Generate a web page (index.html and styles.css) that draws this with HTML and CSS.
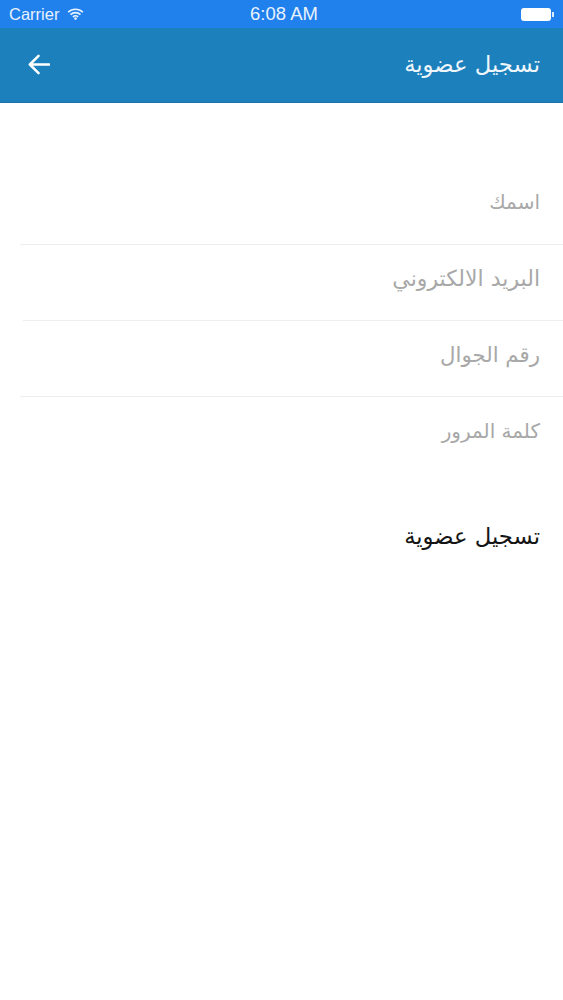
FILE: index.html
```html
<!DOCTYPE html>
<html lang="ar">
<head>
<meta charset="utf-8">
<title>تسجيل عضوية</title>
<link rel="stylesheet" href="styles.css">
</head>
<body>
<div class="status">
  <div class="status-left">
    <span>Carrier</span>
    <svg class="wifi" viewBox="0 0 18 13" width="17" height="12"><path d="M1 4.6a11.4 11.4 0 0 1 16 0M3.6 7.2a7.8 7.8 0 0 1 10.8 0M6.2 9.7a4 4 0 0 1 5.6 0" fill="none" stroke="#e8f2fd" stroke-width="1.7"/><circle cx="9" cy="11.5" r="1.4" fill="#e8f2fd"/></svg>
  </div>
  <div class="status-time">6:08 AM</div>
  <div class="status-right">
    <span class="battery"></span><span class="battery-tip"></span>
  </div>
</div>
<header class="bar">
  <svg class="back" viewBox="0 0 24 22" width="22" height="21"><path d="M23 11H2M11.5 1.5 2 11l9.5 9.5" fill="none" stroke="#fff" stroke-width="2.7" stroke-linecap="round" stroke-linejoin="round"/></svg>
  <h1 class="title" dir="rtl">تسجيل عضوية</h1>
</header>
<main class="form">
  <div class="field f-name" dir="rtl">اسمك</div>
  <div class="rule rule-a"></div>
  <div class="field f-email" dir="rtl">البريد الالكتروني</div>
  <div class="rule rule-b"></div>
  <div class="field f-phone" dir="rtl">رقم الجوال</div>
  <div class="rule rule-a"></div>
  <div class="field f-pass" dir="rtl">كلمة المرور</div>
  <div class="submit" dir="rtl">تسجيل عضوية</div>
</main>
</body>
</html>
```
FILE: styles.css
```css
* { box-sizing: border-box; }
html, body { margin: 0; padding: 0; background: #fff; }
body { font-family: "DejaVu Sans", "Noto Sans", sans-serif; width: 563px; height: 1000px; overflow: hidden; }
.status { height: 28px; background: #2080ec; color: #e8f2fd; display: grid; grid-template-columns: 1fr auto 1fr; align-items: center; padding: 0 9px; font-family: "Liberation Sans", sans-serif; font-size: 16.5px; }
.status-left { display: flex; align-items: center; gap: 8px; }
.status-time { font-size: 18.5px; color: #e8f2fd; margin-left: 5px; }
.status-right { display: flex; justify-content: flex-end; align-items: center; }
.battery { width: 30px; height: 13px; background: #fff; border-radius: 3px; }
.battery-tip { width: 2px; height: 5px; background: #dbe9fb; margin-left: 1px; }
.bar { height: 75px; background: #1b80bc; display: flex; align-items: center; justify-content: space-between; padding: 0 23px 3px 28px; box-shadow: inset 0 -1px 0 #1a74ab; }
.back { display: block; }
.title { margin: 0; font-size: 22.7px; font-weight: 400; color: #eef6fb; }
.form { display: flex; flex-direction: column; padding-top: 66px; }
.field { height: 75px; padding: 17px 23px 0 0; font-size: 20px; line-height: 32px; color: #a8a8a8; }
.f-email { font-size: 22px; padding-top: 18px; }
.f-phone { font-size: 21.3px; padding-top: 18px; }
.f-pass { padding-top: 18px; }
.rule { height: 1px; background: #eeeeee; flex: none; }
.rule-a { margin-left: 20px; }
.rule-b { margin-left: 23px; }
.submit { margin-top: 48px; padding-right: 23px; font-size: 22.7px; line-height: 32px; color: #141414; }
```
